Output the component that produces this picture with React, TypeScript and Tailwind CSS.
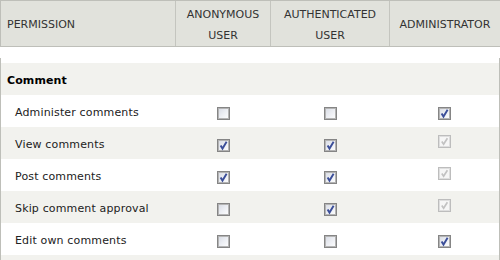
import React from "react";

type State = "off" | "on" | "dis";

function Box({ s }: { s: State }) {
  if (s === "dis") {
    return (
      <div className="mt-[8px] w-[13px] h-[13px] border border-[#bdbdbd] shadow-[inset_0_0_0_1px_#dedede] bg-[#f6f6f6] flex items-center justify-center">
        <svg width="11" height="11" viewBox="0 0 11 11">
          <path d="M2.8 5.6 L4.6 8.2 L8.4 2.2" fill="none" stroke="#c2c2c2" strokeWidth="1.7" />
        </svg>
      </div>
    );
  }
  return (
    <div className="mt-[12px] w-[13px] h-[13px] border border-[#858585] shadow-[inset_0_0_0_1px_#b4b4b4] bg-[linear-gradient(135deg,#d6dae3_0%,#eceef3_50%,#ffffff_100%)] flex items-center justify-center">
      {s === "on" && (
        <svg width="11" height="11" viewBox="0 0 11 11">
          <path d="M2.6 5.4 L4.5 8.6 L8.6 1.8" fill="none" stroke="#3b4e99" strokeWidth="1.9" />
        </svg>
      )}
    </div>
  );
}

const rows: { label: string; c: [State, State, State] }[] = [
  { label: "Administer comments", c: ["off", "off", "on"] },
  { label: "View comments", c: ["on", "on", "dis"] },
  { label: "Post comments", c: ["on", "on", "dis"] },
  { label: "Skip comment approval", c: ["off", "on", "dis"] },
  { label: "Edit own comments", c: ["off", "off", "on"] },
];

export default function App() {
  return (
    <div className="w-[500px] h-[260px] overflow-hidden bg-white text-[11px] text-[#222] font-['DejaVu_Sans',Verdana,sans-serif]">
      <div className="flex h-[47px] bg-[#e1e2dc] border-t border-b border-l border-[#bebfb9] text-[#333] uppercase leading-[21px]">
        <div className="w-[174px] pl-[6px] pt-[1px] flex items-center">Permission</div>
        <div className="w-[95px] border-l border-[#c4c5bf] pt-[2px] flex items-center justify-center text-center">
          Anonymous
          <br />
          user
        </div>
        <div className="w-[119px] border-l border-[#c4c5bf] pt-[2px] flex items-center justify-center text-center">
          Authenticated
          <br />
          user
        </div>
        <div className="flex-1 border-l border-[#c4c5bf] pt-[1px] flex items-center justify-center text-center">
          Administrator
        </div>
      </div>
      <div className="h-[11px]" />
      <div className="border-l border-r border-[#bebfb9]">
        <div className="h-[5px]" />
        <div className="h-[32px] bg-[#f2f2ee] pl-[6px] pt-[11px] leading-[13px] font-bold text-black tracking-[0.1px]">
          Comment
        </div>
        {rows.map((r, i) => (
          <div
            key={r.label}
            className={`h-[32px] flex items-start ${i % 2 === 0 ? "bg-white" : "bg-[#f2f2ee]"}`}
          >
            <div className="w-[174px] pl-[14px] pt-[11px] leading-[13px] tracking-[0.15px]">{r.label}</div>
            <div className="w-[95px] flex justify-center pl-[1px]">
              <Box s={r.c[0]} />
            </div>
            <div className="w-[119px] flex justify-center pl-[1px]">
              <Box s={r.c[1]} />
            </div>
            <div className="flex-1 flex justify-center pl-[1px]">
              <Box s={r.c[2]} />
            </div>
          </div>
        ))}
        <div className="h-[32px] bg-[#f2f2ee]" />
      </div>
    </div>
  );
}
